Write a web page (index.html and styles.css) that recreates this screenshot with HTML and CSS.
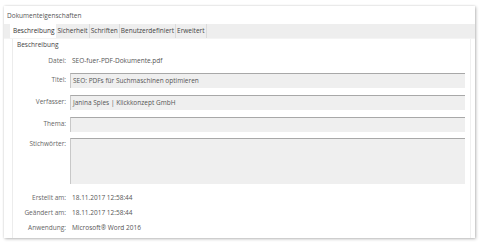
FILE: index.html
```html
<!DOCTYPE html>
<html lang="de">
<head>
<meta charset="utf-8">
<link rel="stylesheet" href="styles.css">
</head>
<body>
<div class="dialog">
  <div class="title">Dokumenteigenschaften</div>
  <div class="tabs">
    <div class="tab active">Beschreibung</div>
    <div class="tab">Sicherheit</div>
    <div class="tab">Schriften</div>
    <div class="tab">Benutzerdefiniert</div>
    <div class="tab">Erweitert</div>
  </div>
  <div class="panel">
    <div class="group-label">Beschreibung</div>
    <div class="rows">
      <div class="row plain"><span class="lbl">Datei:</span><span class="val">SEO-fuer-PDF-Dokumente.pdf</span></div>
      <div class="row field"><span class="lbl">Titel:</span><span class="box">SEO: PDFs für Suchmaschinen optimieren</span></div>
      <div class="row field"><span class="lbl">Verfasser:</span><span class="box">Janina Spies | Klickkonzept GmbH</span></div>
      <div class="row field"><span class="lbl">Thema:</span><span class="box"></span></div>
      <div class="row area"><span class="lbl">Stichwörter:</span><span class="box big"></span></div>
      <div class="row plain meta first"><span class="lbl">Erstellt am:</span><span class="val">18.11.2017 12:58:44</span></div>
      <div class="row plain meta"><span class="lbl">Geändert am:</span><span class="val">18.11.2017 12:58:44</span></div>
      <div class="row plain meta"><span class="lbl">Anwendung:</span><span class="val">Microsoft® Word 2016</span></div>
    </div>
  </div>
</div>
</body>
</html>
```
FILE: styles.css
```css
html, body {
  margin: 0;
  padding: 0;
  background: #fff;
}
body {
  font-family: "Open Sans", "Noto Sans", sans-serif;
  font-size: 6.5px;
  color: #555;
  width: 480px;
  height: 243px;
  overflow: hidden;
}
.dialog {
  margin: 6px 0 0 4px;
  width: 471px;
  height: 232px;
  background: #fff;
  box-shadow: 1px 1px 3px rgba(0,0,0,0.25), 0 0 2px rgba(0,0,0,0.12);
  display: flex;
  flex-direction: column;
}
.title {
  height: 18px;
  line-height: 19px;
  padding-left: 3px;
  color: #555;
}
.tabs {
  display: flex;
  background: #eeeeee;
  height: 14px;
  padding-left: 6px;
  border-bottom: 1px solid #f4f4f4;
}
.tab {
  line-height: 14px;
  padding: 0 1px 0 1px;
  border-right: 1px solid #dcdcdc;
  color: #444;
}
.tab.active {
  background: #fff;
  padding: 0 2px 0 3px;
  border-right: none;
  color: #333;
}
.panel {
  flex: 1;
  margin-left: 8px;
  margin-right: 4px;
  border-left: 1px solid #ececec;
  border-right: 1px solid #f0f0f0;
  display: flex;
  flex-direction: column;
}
.group-label {
  padding-left: 4px;
  line-height: 12px;
  color: #444;
}
.rows {
  display: flex;
  flex-direction: column;
  padding-top: 4px;
}
.row {
  display: flex;
  align-items: flex-start;
}
.lbl {
  width: 53px;
  text-align: right;
  flex: none;
  color: #666;
}
.plain {
  height: 11px;
  line-height: 11px;
}
.plain .val {
  margin-left: 6px;
  color: #555;
}
.field {
  margin-top: 6px;
  height: 16px;
  align-items: center;
}
.field .lbl {
  line-height: 16px;
}
.box {
  margin-left: 4px;
  flex: 1;
  height: 14px;
  line-height: 14px;
  background: #efefef;
  border-top: 1px solid #a8a8a8;
  border-left: 1px solid #c8c8c8;
  padding-left: 2px;
  margin-right: 5px;
  color: #555;
}
.area {
  margin-top: 6px;
}
.area .lbl {
  line-height: 12px;
}
.box.big {
  height: 45px;
}
.meta.first {
  margin-top: 8px;
}
.meta {
  margin-top: 4px;
}
```
